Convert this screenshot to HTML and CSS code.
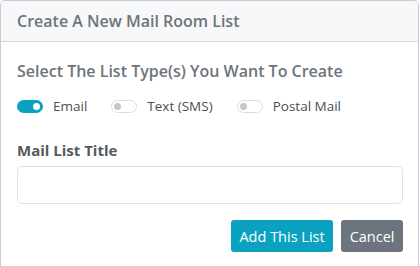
FILE: index.html
```html
<!DOCTYPE html>
<html>
<head>
<meta charset="utf-8">
<link rel="stylesheet" href="styles.css">
</head>
<body>
<div class="card">
  <div class="card-header">Create A New Mail Room List</div>
  <div class="card-body">
    <div class="section-title">Select The List Type(s) You Want To Create</div>
    <div class="switches">
      <label class="switch-item"><span class="switch on"><span class="knob"></span></span><span class="switch-label">Email</span></label>
      <label class="switch-item"><span class="switch"><span class="knob"></span></span><span class="switch-label">Text (SMS)</span></label>
      <label class="switch-item"><span class="switch"><span class="knob"></span></span><span class="switch-label">Postal Mail</span></label>
    </div>
    <div class="field-label">Mail List Title</div>
    <input class="text-input" type="text">
    <div class="actions">
      <button class="btn btn-info">Add This List</button>
      <button class="btn btn-secondary">Cancel</button>
    </div>
  </div>
</div>
</body>
</html>
```

FILE: styles.css
```css
html, body {
  margin: 0;
  padding: 0;
  background: #fff;
}
body {
  font-family: "Open Sans", "Noto Sans", sans-serif;
  width: 420px;
  height: 266px;
  overflow: hidden;
}
.card {
  box-sizing: border-box;
  width: 419px;
  height: 266px;
  border: 1px solid #c9ccd0;
  border-bottom: none;
  border-radius: 5px 5px 0 0;
  background: #fff;
}
.card-header {
  box-sizing: border-box;
  height: 41px;
  background: #f7f8fa;
  border-bottom: 1px solid #d3d6da;
  border-radius: 4px 4px 0 0;
  padding: 0 16px;
  display: flex;
  align-items: center;
  font-size: 16px;
  font-weight: 600;
  color: #6d747b;
}
.card-body {
  padding: 19px 15px 0 16px;
}
.section-title {
  font-size: 16px;
  font-weight: 600;
  color: #6d747b;
  line-height: 20px;
}
.switches {
  display: flex;
  align-items: center;
  margin-top: 17px;
  height: 16px;
}
.switch-item {
  display: flex;
  align-items: center;
  margin-right: 24px;
}
.switch {
  position: relative;
  box-sizing: border-box;
  width: 26px;
  height: 13px;
  border-radius: 7px;
  border: 1px solid #dadde1;
  background: #fff;
}
.switch .knob {
  position: absolute;
  top: 2px;
  left: 2px;
  width: 7px;
  height: 7px;
  border-radius: 50%;
  background: #c4c7cb;
}
.switch.on {
  background: #0aa2c0;
  border-color: #0aa2c0;
}
.switch.on .knob {
  left: auto;
  right: 2px;
  background: #fff;
}
.switch-label {
  margin-left: 10px;
  font-size: 13.5px;
  color: #4a4f55;
}
.field-label {
  margin-top: 26px;
  font-size: 15px;
  font-weight: 700;
  color: #555a60;
  line-height: 20px;
}
.text-input {
  display: block;
  box-sizing: border-box;
  width: 100%;
  height: 38px;
  margin-top: 6px;
  border: 1px solid #dee1e5;
  border-radius: 5px;
  background: #fff;
}
.actions {
  display: flex;
  justify-content: flex-end;
  gap: 8px;
  margin-top: 16px;
}
.btn {
  border: none;
  border-radius: 3px;
  height: 32px;
  padding: 0 8.5px;
  font-family: "Open Sans", "Noto Sans", sans-serif;
  font-size: 14.5px;
  color: #fff;
}
.btn-info {
  background: #0aa2c0;
}
.btn-secondary {
  background: #6c757d;
}
```
